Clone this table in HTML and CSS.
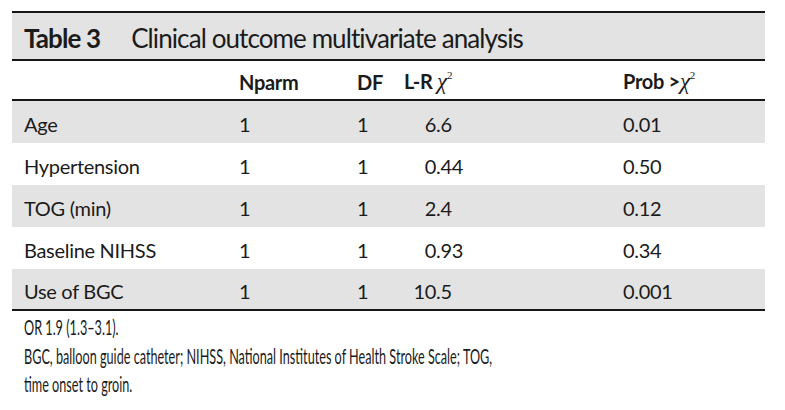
FILE: index.html
```html
<!DOCTYPE html>
<html>
<head>
<meta charset="utf-8">
<link rel="stylesheet" href="styles.css">
</head>
<body>
<div class="table">
  <div class="title"><span class="label">Table 3</span><span class="caption">Clinical outcome multivariate analysis</span></div>
  <div class="row head">
    <div></div>
    <div>Nparm</div>
    <div>DF</div>
    <div>L-R <span class="chi">χ</span><sup>2</sup></div>
    <div>Prob &gt;<span class="chi">χ</span><sup>2</sup></div>
  </div>
  <div class="row">
    <div>Age</div><div>1</div><div>1</div>
    <div><span class="int">6</span>.6</div><div>0.01</div>
  </div>
  <div class="row">
    <div>Hypertension</div><div>1</div><div>1</div>
    <div><span class="int">0</span>.44</div><div>0.50</div>
  </div>
  <div class="row">
    <div>TOG (min)</div><div>1</div><div>1</div>
    <div><span class="int">2</span>.4</div><div>0.12</div>
  </div>
  <div class="row">
    <div>Baseline NIHSS</div><div>1</div><div>1</div>
    <div><span class="int">0</span>.93</div><div>0.34</div>
  </div>
  <div class="row">
    <div>Use of BGC</div><div>1</div><div>1</div>
    <div><span class="int">10</span>.5</div><div>0.001</div>
  </div>
</div>
<div class="notes">
  <p>OR 1.9 (1.3–3.1).</p>
  <p>BGC, balloon guide catheter; NIHSS, National Institutes of Health Stroke Scale; TOG,<br>time onset to groin.</p>
</div>
</body>
</html>
```
FILE: styles.css
```css
html, body {
  margin: 0;
  padding: 0;
  background: #ffffff;
}
body {
  font-family: Lato, "Open Sans", sans-serif;
  color: #1b1b1b;
}
.table {
  margin: 11px 0 0 12px;
  width: 753px;
  border-top: 2px solid #161616;
  border-bottom: 2px solid #161616;
}
.title {
  display: flex;
  align-items: center;
  height: 48px;
  box-sizing: border-box;
  padding: 4px 0 0 12px;
  background: #e3e3e3;
  border-bottom: 2px solid #161616;
  font-size: 26px;
  letter-spacing: -0.9px;
}
.label {
  font-weight: 700;
  margin-right: 31px;
}
.row {
  display: grid;
  grid-template-columns: 215px 118px 47px 219px 1fr;
  align-items: center;
  box-sizing: border-box;
  height: 42px;
  padding: 3px 0 0 12px;
  font-size: 20px;
  letter-spacing: -0.3px;
}
.row:nth-child(odd) {
  background: #e3e3e3;
}
.row:last-child {
  height: 40px;
}
.row.head {
  height: 40px;
  font-weight: 700;
  border-bottom: 2px solid #161616;
  background: #ffffff;
}
.chi {
  font-family: "Liberation Serif", serif;
  font-style: italic;
  font-weight: 400;
  font-size: 23px;
}
sup {
  font-size: 11px;
  font-weight: 400;
  font-family: "Liberation Serif", serif;
  vertical-align: 10px;
  line-height: 0;
}
.int {
  display: inline-block;
  width: 32px;
  text-align: right;
}
.notes {
  padding: 2px 0 0 24px;
  font-size: 22px;
  line-height: 28.5px;
  white-space: nowrap;
  transform: scaleX(0.575);
  transform-origin: 24px 0;
}
.notes p {
  margin: 0;
}
```
